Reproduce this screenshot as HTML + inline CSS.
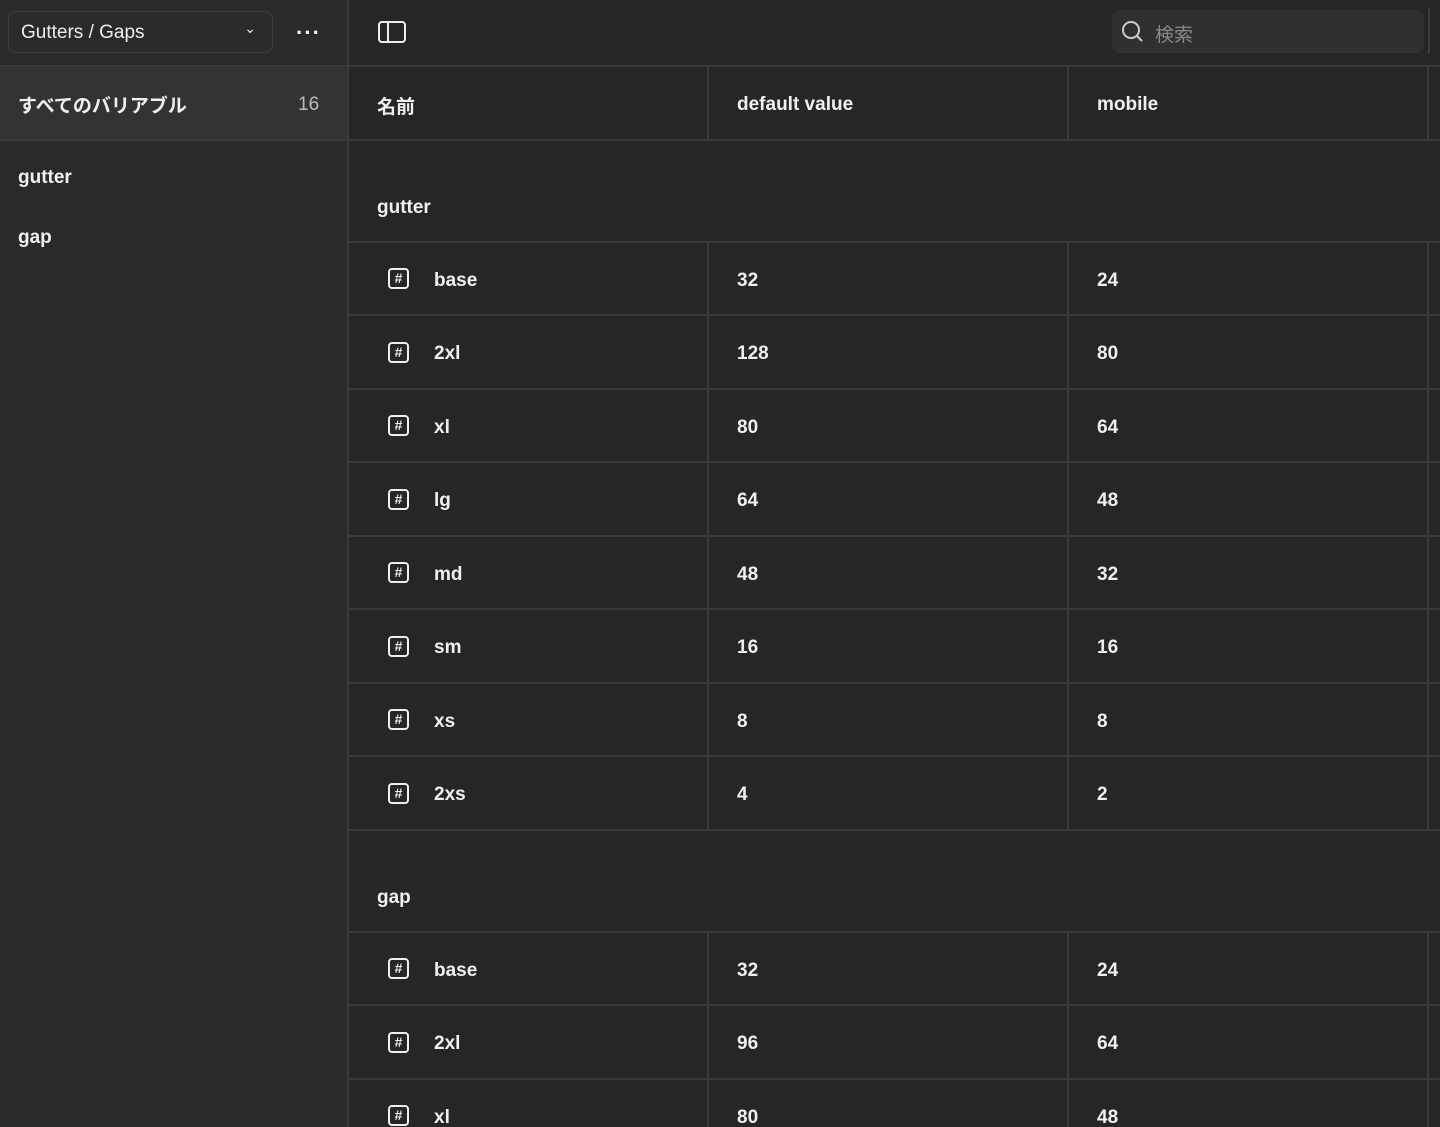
<!DOCTYPE html>
<html style="overflow:hidden;height:1127px"><head><meta charset="utf-8"><style>
*{box-sizing:border-box;margin:0;padding:0}
body{width:1440px;height:1127px;overflow:hidden;background:#262626;color:#f0f0f0;font-family:"Liberation Sans","Noto Sans CJK JP",sans-serif;font-size:18px;position:relative}
.side{position:absolute;left:0;top:0;width:349px;height:1127px;background:#2a2a2a;border-right:2px solid #3a3a3a}
.top{position:absolute;left:0;top:0;width:1440px;height:67px;border-bottom:2px solid #3a3a3a}
.dd{position:absolute;left:8px;top:11px;width:265px;height:42px;border:1.5px solid #3d3d3d;border-radius:8px;font-size:19px;padding:10px 12px;color:#eee}
.abs{position:absolute}
.sel{position:absolute;left:0;top:67px;width:347px;height:74px;background:#333;border-bottom:2px solid #3a3a3a}
.main{position:absolute;left:349px;top:67px;width:1091px}
.row{position:relative;height:73.5px;border-bottom:2px solid #3a3a3a}
.row .c{position:absolute;top:0;height:100%;border-right:2px solid #3a3a3a;display:flex;align-items:center;font-weight:bold;font-size:19px;padding-top:5px}
.c1{left:0;width:360px;padding-left:28px}
.c2{left:360px;width:360px;padding-left:28px}
.c3{left:720px;width:360px;padding-left:28px}
.grp{position:relative;height:102px;border-bottom:2px solid #3a3a3a}
.grp span{position:absolute;left:28px;bottom:22px;font-weight:bold;font-size:19px}
.ic{width:21px;height:21px;border:2px solid #eee;border-radius:4px;margin-left:11px;margin-right:25px;font-size:14px;line-height:17px;text-align:center;font-weight:bold;margin-top:-4px}
</style></head><body>
<div class="side"></div>
<div class="top"></div>
<div class="dd">Gutters / Gaps<span style="position:absolute;right:16px;top:8px;font-size:14px">&#8964;</span></div>
<div class="abs" style="left:296px;top:20px;font-size:22px;letter-spacing:1px;font-weight:bold">&middot;&middot;&middot;</div>
<div class="abs" style="left:378px;top:21px;width:28px;height:22px;border:2px solid #eee;border-radius:4px"><div style="position:absolute;left:7px;top:0;width:2px;height:18px;background:#eee"></div></div>
<div class="abs" style="left:1112px;top:10px;width:312px;height:43px;background:#303030;border-radius:8px"></div>
<svg class="abs" style="left:1121px;top:20px" width="24" height="24" viewBox="0 0 24 24"><circle cx="10" cy="10" r="8" fill="none" stroke="#ccc" stroke-width="2"/><path d="M16 16l5 5" stroke="#ccc" stroke-width="2"/></svg>
<div class="abs" style="left:1155px;top:20px;color:#888;font-size:19px">検索</div>
<div class="abs" style="left:1428px;top:8px;width:2px;height:46px;background:#3a3a3a"></div>
<div class="sel"></div>
<div class="abs" style="left:18px;top:91px;font-weight:bold;font-size:19px">すべてのバリアブル</div>
<div class="abs" style="left:298px;top:94px;color:#bbb;font-size:19px">16</div>
<div class="abs" style="left:18px;top:167px;font-weight:bold;font-size:19px">gutter</div>
<div class="abs" style="left:18px;top:227px;font-weight:bold;font-size:19px">gap</div>
<div class="main">
<div class="row"><div class="c c1">名前</div><div class="c c2">default value</div><div class="c c3">mobile</div></div>
<div class="grp"><span>gutter</span></div>
<div class="row"><div class="c c1"><div class="ic">#</div>base</div><div class="c c2">32</div><div class="c c3">24</div></div>
<div class="row"><div class="c c1"><div class="ic">#</div>2xl</div><div class="c c2">128</div><div class="c c3">80</div></div>
<div class="row"><div class="c c1"><div class="ic">#</div>xl</div><div class="c c2">80</div><div class="c c3">64</div></div>
<div class="row"><div class="c c1"><div class="ic">#</div>lg</div><div class="c c2">64</div><div class="c c3">48</div></div>
<div class="row"><div class="c c1"><div class="ic">#</div>md</div><div class="c c2">48</div><div class="c c3">32</div></div>
<div class="row"><div class="c c1"><div class="ic">#</div>sm</div><div class="c c2">16</div><div class="c c3">16</div></div>
<div class="row"><div class="c c1"><div class="ic">#</div>xs</div><div class="c c2">8</div><div class="c c3">8</div></div>
<div class="row"><div class="c c1"><div class="ic">#</div>2xs</div><div class="c c2">4</div><div class="c c3">2</div></div>
<div class="grp"><span>gap</span></div>
<div class="row"><div class="c c1"><div class="ic">#</div>base</div><div class="c c2">32</div><div class="c c3">24</div></div>
<div class="row"><div class="c c1"><div class="ic">#</div>2xl</div><div class="c c2">96</div><div class="c c3">64</div></div>
<div class="row"><div class="c c1"><div class="ic">#</div>xl</div><div class="c c2">80</div><div class="c c3">48</div></div>
</div>
</body></html>
